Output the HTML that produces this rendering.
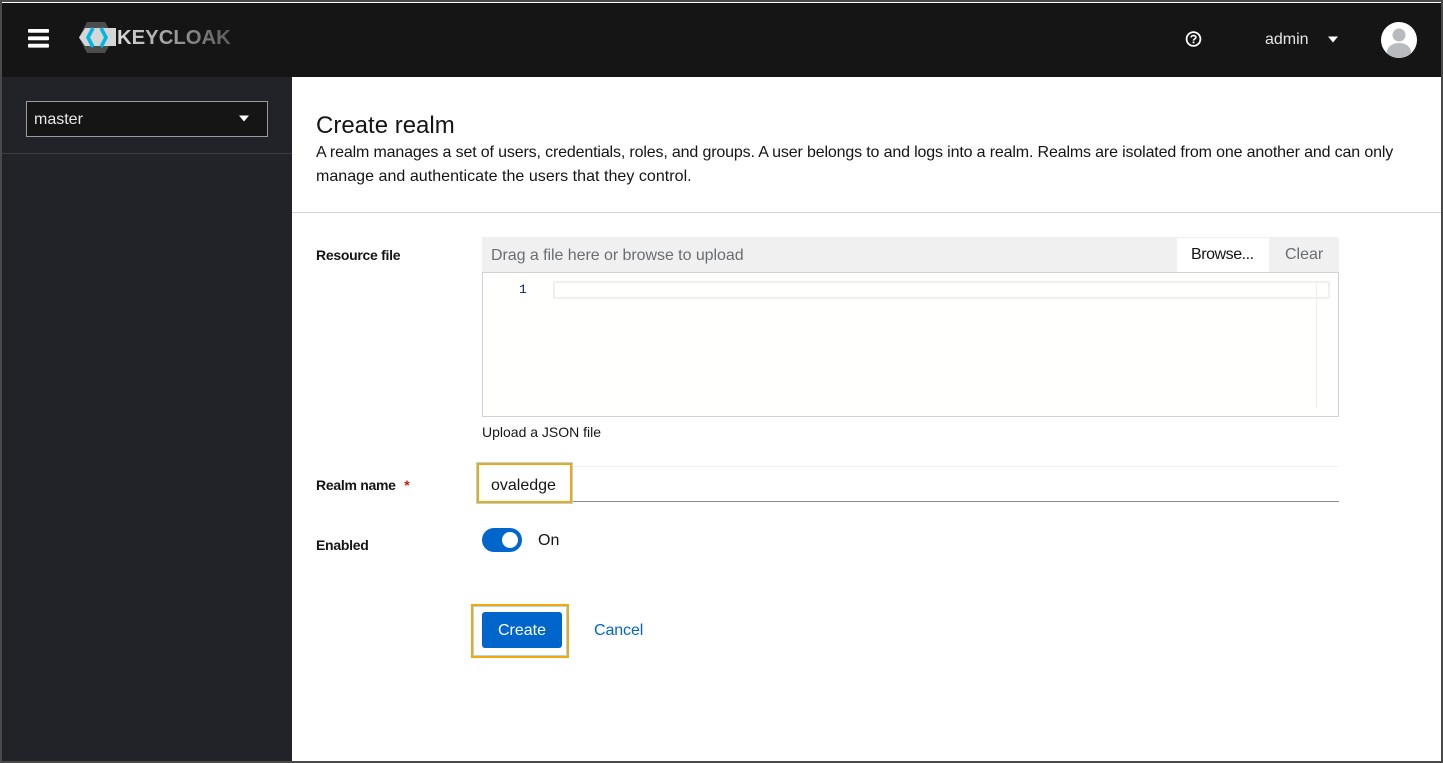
<!DOCTYPE html>
<html><head><meta charset="utf-8"><title>Create realm</title>
<style>
html,body{margin:0;padding:0;background:#fff}
#p{position:relative;width:1443px;height:763px;overflow:hidden;background:#fff;font-family:"Liberation Sans",sans-serif;font-size:16px;color:#151515}
#p>*{position:absolute}
.t{white-space:nowrap;line-height:24px}
.b{font-weight:700;font-size:14px;letter-spacing:-.28px}
</style></head><body><div id="p">
<div style="left:0;top:3px;width:1443px;height:74px;background:#151515"></div>
<div style="left:0;top:77px;width:292px;height:686px;background:#212328"></div>
<div style="left:2px;top:153px;width:290px;height:1px;background:#3c3f42"></div>
<svg style="left:27px;top:28px" width="23" height="21"><rect x="1" y="1" width="21" height="3.800" rx="1" fill="#fff"/><rect x="1" y="8.400" width="21" height="3.800" rx="1" fill="#fff"/><rect x="1" y="15.800" width="21" height="3.800" rx="1" fill="#fff"/></svg>
<svg style="left:78px;top:21px" width="40" height="33" viewBox="0 0 40 33"><polygon points="9,1 27,1 36,16.500 27,32 9,32 1,16.500" fill="#4d4d4d"/><polygon points="1,16.500 7,7 38,7 38,25 7,25" fill="#d6d6d6"/><polyline points="15,7 10,16.500 15,26" fill="none" stroke="#00b8e3" stroke-width="3.600"/><polyline points="23,7 28,16.500 23,26" fill="none" stroke="#00b8e3" stroke-width="3.600"/></svg>
<div class="t" style="left:117px;top:26px;font-size:20.300px;font-weight:700;background:linear-gradient(90deg,#dcdcdc,#5a5a5a);-webkit-background-clip:text;background-clip:text;color:transparent">KEYCLOAK</div>
<svg style="left:1184px;top:30px" width="19" height="18" viewBox="0 0 19 18"><circle cx="9.500" cy="9" r="6.900" fill="none" stroke="#fff" stroke-width="1.800"/><path d="M7.100 7.500 C7.100 4.900 11.900 4.900 11.900 7.500 C11.900 9 9.500 8.800 9.500 10.600" fill="none" stroke="#fff" stroke-width="1.600"/><rect x="8.600" y="11.500" width="1.800" height="1.800" fill="#fff"/></svg>
<div class="t" style="left:1265px;top:28px;color:#e4e4e4">admin</div>
<svg style="left:1327px;top:36px" width="12" height="7"><polygon points="1,0.500 11,0.500 6,6.500" fill="#fff"/></svg>
<svg style="left:1381px;top:22px" width="36" height="36" viewBox="0 0 36 36"><defs><clipPath id="c"><circle cx="18" cy="18" r="18"/></clipPath></defs><circle cx="18" cy="18" r="18" fill="#fff"/><g clip-path="url(#c)" fill="#b8bbbe"><circle cx="18" cy="13" r="6.500"/><ellipse cx="18" cy="30" rx="12" ry="9"/></g></svg>

<div style="left:26px;top:101px;width:240px;height:34px;background:#151515;border:1px solid #9a9b9c"></div>
<div class="t" style="left:34px;top:108px;color:#e8e8e8">master</div>
<svg style="left:238px;top:115px" width="12" height="7"><polygon points="1,0.500 11,0.500 6,6.500" fill="#fff"/></svg>

<div class="t" style="left:316px;top:111px;font-size:24px;line-height:30px">Create realm</div>
<div class="t" style="left:316px;top:141px;letter-spacing:-.15px">A realm manages a set of users, credentials, roles, and groups. A user belongs to and logs into a realm. Realms are isolated from one another and can only</div>
<div class="t" style="left:316px;top:165px;letter-spacing:.04px">manage and authenticate the users that they control.</div>
<div style="left:292px;top:212px;width:1149px;height:1px;background:#d2d2d2"></div>

<div class="t b" style="left:316px;top:243px">Resource file</div>
<div style="left:482px;top:237px;width:857px;height:35px;background:#f0f0f0"></div>
<div class="t" style="left:491px;top:244px;color:#6a6e73;letter-spacing:-.05px">Drag a file here or browse to upload</div>
<div style="left:1177px;top:238px;width:92px;height:34px;background:#fff"></div>
<div class="t" style="left:1191px;top:243px;letter-spacing:-.45px">Browse...</div>
<div class="t" style="left:1285px;top:243px;color:#6a6e73">Clear</div>
<div style="left:482px;top:272px;width:855px;height:143px;background:#fffffd;border:1px solid #d2d2d2"></div>
<div style="left:553px;top:281px;width:773px;height:14px;border:2px solid #f0f0f0"></div>
<div style="left:1316px;top:281px;width:1px;height:126px;background:#eeeeee"></div>
<div class="t" style="left:519px;top:278px;font:13px/24px 'Liberation Mono',monospace;color:#0b216f">1</div>
<div class="t" style="left:482px;top:420px;font-size:14px">Upload a JSON file</div>

<div class="t b" style="left:316px;top:473px">Realm name <span style="color:#c9190b;margin-left:5px">*</span></div>
<div style="left:482px;top:466px;width:857px;height:36px;background:#fff;border-top:1px solid #f0f0f0;border-bottom:1px solid #8a8d90;box-sizing:border-box"></div>
<div style="left:477px;top:463px;width:91px;height:36px;border:2px solid #f5a80a;outline:1px solid #a9d6f0;background:#fff"></div>
<div class="t" style="left:491px;top:474px">ovaledge</div>

<div class="t b" style="left:316px;top:533px">Enabled</div>
<div style="left:482px;top:528px;width:40px;height:24px;border-radius:12px;background:#06c"></div>
<div style="left:502px;top:532px;width:16px;height:16px;border-radius:50%;background:#fff"></div>
<div class="t" style="left:538px;top:529px">On</div>

<div style="left:471px;top:604px;width:94px;height:50px;border:2px solid #f5a80a;outline:1px solid #a9d6f0;outline-offset:-3px"></div>
<div class="t" style="left:482px;top:612px;width:80px;height:36px;line-height:38px;background:#06c;border-radius:3px;color:#fff;text-align:center">Create</div>
<div class="t" style="left:594px;top:619px;color:#06c;letter-spacing:-.1px">Cancel</div>

<div style="left:0;top:0;width:1443px;height:2px;background:#4a4a4a"></div>
<div style="left:0;top:2px;width:1443px;height:1px;background:#fff"></div>
<div style="left:0;top:761px;width:1443px;height:2px;background:#4a4a4a"></div>
<div style="left:0;top:0;width:2px;height:763px;background:#4a4a4a"></div>
<div style="left:1441px;top:0;width:2px;height:763px;background:#4a4a4a"></div>
</div></body></html>
